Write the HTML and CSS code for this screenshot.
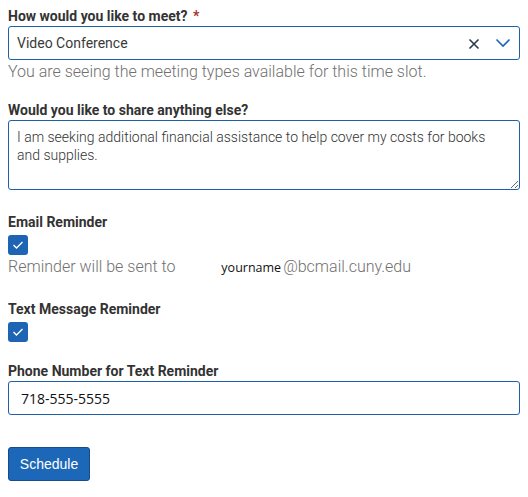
FILE: index.html
```html
<!DOCTYPE html>
<html>
<head>
<meta charset="utf-8">
<link rel="stylesheet" href="styles.css">
</head>
<body>
<form class="form">
  <div class="field field-meet">
    <label class="label">How would you like to meet? <span class="req">*</span></label>
    <div class="select">
      <span class="select-value">Video Conference</span>
      <span class="select-icons">
        <svg class="icon-x" width="12" height="12" viewBox="0 0 12 12"><path d="M1.5 1.5 L10.5 10.5 M10.5 1.5 L1.5 10.5" stroke="#2b3a4a" stroke-width="1.6" fill="none"/></svg>
        <svg class="icon-chev" width="16" height="10" viewBox="0 0 16 10"><path d="M1.5 1.5 L8 8 L14.5 1.5" stroke="#1e64b4" stroke-width="1.6" fill="none"/></svg>
      </span>
    </div>
    <div class="help">You are seeing the meeting types available for this time slot.</div>
  </div>

  <div class="field field-notes">
    <label class="label">Would you like to share anything else?</label>
    <textarea class="textarea">I am seeking additional financial assistance to help cover my costs for books and supplies.</textarea>
  </div>

  <div class="field field-email">
    <label class="label">Email Reminder</label>
    <span class="check"><svg width="12" height="10" viewBox="0 0 12 10"><path d="M1.5 5 L4.5 8 L10.5 2" stroke="#fff" stroke-width="1.4" fill="none"/></svg></span>
    <div class="help">Reminder will be sent to <span class="name">yourname</span>@bcmail.cuny.edu</div>
  </div>

  <div class="field field-text">
    <label class="label">Text Message Reminder</label>
    <span class="check"><svg width="12" height="10" viewBox="0 0 12 10"><path d="M1.5 5 L4.5 8 L10.5 2" stroke="#fff" stroke-width="1.4" fill="none"/></svg></span>
  </div>

  <div class="field field-phone">
    <label class="label">Phone Number for Text Reminder</label>
    <input class="input" type="text" value="718-555-5555">
  </div>

  <button class="btn" type="button">Schedule</button>
</form>
</body>
</html>
```
FILE: styles.css
```css
html, body {
  margin: 0;
  padding: 0;
  background: #fff;
}
.form {
  padding: 8px 8px 0 8px;
  font-family: Roboto, "Liberation Sans", sans-serif;
  color: #333;
  display: flex;
  flex-direction: column;
  align-items: stretch;
}
.field {
  display: flex;
  flex-direction: column;
  align-items: flex-start;
}
.field-meet { margin-bottom: 20px; }
.field-notes { margin-bottom: 24px; }
.field-email { margin-bottom: 23px; }
.field-text { margin-bottom: 21px; }
.field-phone { margin-bottom: 0; }
.label {
  font-size: 14px;
  font-weight: 700;
  line-height: 16px;
  color: #333;
  margin-bottom: 2px;
}
.req {
  color: #a8322d;
  margin-left: 2px;
}
.select {
  box-sizing: border-box;
  width: 512px;
  height: 34px;
  border: 1px solid #1e5fa8;
  border-radius: 3px;
  display: flex;
  align-items: center;
  justify-content: space-between;
  padding: 0 8px 0 8px;
  font-size: 14px;
}
.select-value {
  color: #3a3a3a;
}
.select-icons {
  display: flex;
  align-items: center;
  gap: 15px;
}
.icon-x { margin-top: 1px; }
.help {
  font-size: 16px;
  line-height: 20px;
  color: #707070;
  font-weight: 300;
  margin-top: 2px;
}
.textarea {
  box-sizing: border-box;
  width: 512px;
  height: 70px;
  border: 1px solid #1e5fa8;
  border-radius: 3px;
  padding: 7px 8px;
  font-family: Roboto, "Liberation Sans", sans-serif;
  font-size: 14px;
  font-weight: 300;
  line-height: 18px;
  color: #333;
  resize: vertical;
  margin: 0;
}
.check {
  width: 20px;
  height: 20px;
  border-radius: 3px;
  background: #1e64b4;
  display: flex;
  align-items: center;
  justify-content: center;
  margin-top: 3px;
}
.name {
  font-family: "Open Sans", "Liberation Sans", sans-serif;
  font-size: 12.5px;
  font-weight: 400;
  color: #111;
  margin-left: 42px;
  margin-right: 2px;
}
.input {
  box-sizing: border-box;
  width: 512px;
  height: 34px;
  border: 1px solid #1e5fa8;
  border-radius: 3px;
  padding: 0 12px;
  font-family: "Open Sans", "Liberation Sans", sans-serif;
  font-size: 14px;
  color: #111;
  margin: 0;
}
.btn {
  align-self: flex-start;
  width: 82px;
  height: 34px;
  background: #1d67b8;
  border: 1px solid #164c8a;
  border-radius: 3px;
  color: #fff;
  font-family: "Liberation Sans", Arial, sans-serif;
  font-size: 14px;
  margin-top: 32px;
  padding: 0;
}
```
